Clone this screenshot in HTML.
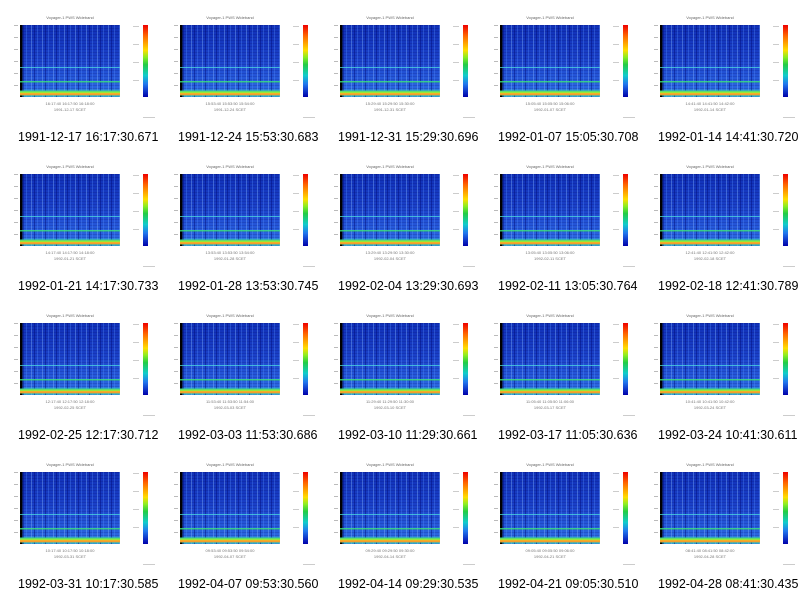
<!DOCTYPE html>
<html><head><meta charset="utf-8"><style>
body{margin:0;width:800px;height:596px;background:#fff;position:relative;overflow:hidden;font-family:"Liberation Sans",sans-serif}
.c{position:absolute;width:160px;height:149px}
.t{position:absolute;left:20px;top:15px;width:100px;text-align:center;font-size:4px;color:#666}
.p{position:absolute;left:20px;top:25px;width:100px;height:72px;
background:
linear-gradient(to bottom,transparent 0,transparent 58%,rgba(80,230,230,.7) 58%,rgba(80,230,230,.7) 59.5%,transparent 59.5%,transparent 78%,rgba(60,230,120,.8) 78%,rgba(60,230,120,.8) 80%,transparent 80%,transparent 91%,#3c9 91%,#9e3 94%,#fa2 95%,#e93 97%,#6d6 98%,transparent 98%),
linear-gradient(to right,#000 0,#000 2.5%,transparent 2.5%),
repeating-linear-gradient(to right,rgba(130,180,255,.4) 0,rgba(130,180,255,.4) 1px,transparent 1px,transparent 3px,rgba(0,10,120,.45) 3px,rgba(0,10,120,.45) 4px,transparent 4px,transparent 6px,rgba(90,150,255,.3) 6px,rgba(90,150,255,.3) 7px,transparent 7px,transparent 11px),
repeating-linear-gradient(to bottom,rgba(0,0,80,.15) 0,rgba(0,0,80,.15) 1px,transparent 1px,transparent 3px),
linear-gradient(to bottom,#1030b8 0,#1a40c8 45%,#2455d8 70%,#2a66e0 88%,#30a0d0 92%);}
.b{position:absolute;left:143px;top:25px;width:5px;height:72px;background:linear-gradient(to bottom,#e00 0,#f60 15%,#fd0 35%,#8e2 45%,#2c4 55%,#1cc 70%,#27e 82%,#00a 100%)}
.ax{position:absolute;left:20px;top:101px;width:100px;font-size:4px;color:#777;text-align:center;line-height:6px}
.cap{position:absolute;left:18px;top:130px;font-size:12.5px;color:#000;white-space:nowrap}
.yl{position:absolute;left:14px;top:25px;width:4px;height:72px;background:repeating-linear-gradient(to bottom,#bbb 0,#bbb 1px,transparent 1px,transparent 12px)}
.cl{position:absolute;left:133px;top:26px;width:6px;height:72px;background:repeating-linear-gradient(to bottom,#ccc 0,#ccc 1px,transparent 1px,transparent 18px)}
.w{position:absolute;left:143px;top:117px;width:12px;height:1px;background:#ccc}
</style></head><body>
<div class="c" style="left:0;top:0"><div class="t">Voyager-1 PWS Wideband</div><div class="yl"></div><div class="p"></div><div class="cl"></div><div class="b"></div><div class="ax">16:17:40 16:17:50 16:18:00<br>1991-12-17 SCET</div><div class="w"></div><div class="cap">1991-12-17 16:17:30.671</div></div>
<div class="c" style="left:160px;top:0"><div class="t">Voyager-1 PWS Wideband</div><div class="yl"></div><div class="p"></div><div class="cl"></div><div class="b"></div><div class="ax">15:53:40 15:53:50 15:54:00<br>1991-12-24 SCET</div><div class="w"></div><div class="cap">1991-12-24 15:53:30.683</div></div>
<div class="c" style="left:320px;top:0"><div class="t">Voyager-1 PWS Wideband</div><div class="yl"></div><div class="p"></div><div class="cl"></div><div class="b"></div><div class="ax">15:29:40 15:29:50 15:30:00<br>1991-12-31 SCET</div><div class="w"></div><div class="cap">1991-12-31 15:29:30.696</div></div>
<div class="c" style="left:480px;top:0"><div class="t">Voyager-1 PWS Wideband</div><div class="yl"></div><div class="p"></div><div class="cl"></div><div class="b"></div><div class="ax">15:05:40 15:05:50 15:06:00<br>1992-01-07 SCET</div><div class="w"></div><div class="cap">1992-01-07 15:05:30.708</div></div>
<div class="c" style="left:640px;top:0"><div class="t">Voyager-1 PWS Wideband</div><div class="yl"></div><div class="p"></div><div class="cl"></div><div class="b"></div><div class="ax">14:41:40 14:41:50 14:42:00<br>1992-01-14 SCET</div><div class="w"></div><div class="cap">1992-01-14 14:41:30.720</div></div>

<div class="c" style="left:0;top:149px"><div class="t">Voyager-1 PWS Wideband</div><div class="yl"></div><div class="p"></div><div class="cl"></div><div class="b"></div><div class="ax">14:17:40 14:17:50 14:18:00<br>1992-01-21 SCET</div><div class="w"></div><div class="cap">1992-01-21 14:17:30.733</div></div>
<div class="c" style="left:160px;top:149px"><div class="t">Voyager-1 PWS Wideband</div><div class="yl"></div><div class="p"></div><div class="cl"></div><div class="b"></div><div class="ax">13:53:40 13:53:50 13:54:00<br>1992-01-28 SCET</div><div class="w"></div><div class="cap">1992-01-28 13:53:30.745</div></div>
<div class="c" style="left:320px;top:149px"><div class="t">Voyager-1 PWS Wideband</div><div class="yl"></div><div class="p"></div><div class="cl"></div><div class="b"></div><div class="ax">13:29:40 13:29:50 13:30:00<br>1992-02-04 SCET</div><div class="w"></div><div class="cap">1992-02-04 13:29:30.693</div></div>
<div class="c" style="left:480px;top:149px"><div class="t">Voyager-1 PWS Wideband</div><div class="yl"></div><div class="p"></div><div class="cl"></div><div class="b"></div><div class="ax">13:05:40 13:05:50 13:06:00<br>1992-02-11 SCET</div><div class="w"></div><div class="cap">1992-02-11 13:05:30.764</div></div>
<div class="c" style="left:640px;top:149px"><div class="t">Voyager-1 PWS Wideband</div><div class="yl"></div><div class="p"></div><div class="cl"></div><div class="b"></div><div class="ax">12:41:40 12:41:50 12:42:00<br>1992-02-18 SCET</div><div class="w"></div><div class="cap">1992-02-18 12:41:30.789</div></div>

<div class="c" style="left:0;top:298px"><div class="t">Voyager-1 PWS Wideband</div><div class="yl"></div><div class="p"></div><div class="cl"></div><div class="b"></div><div class="ax">12:17:40 12:17:50 12:18:00<br>1992-02-25 SCET</div><div class="w"></div><div class="cap">1992-02-25 12:17:30.712</div></div>
<div class="c" style="left:160px;top:298px"><div class="t">Voyager-1 PWS Wideband</div><div class="yl"></div><div class="p"></div><div class="cl"></div><div class="b"></div><div class="ax">11:53:40 11:53:50 11:54:00<br>1992-03-03 SCET</div><div class="w"></div><div class="cap">1992-03-03 11:53:30.686</div></div>
<div class="c" style="left:320px;top:298px"><div class="t">Voyager-1 PWS Wideband</div><div class="yl"></div><div class="p"></div><div class="cl"></div><div class="b"></div><div class="ax">11:29:40 11:29:50 11:30:00<br>1992-03-10 SCET</div><div class="w"></div><div class="cap">1992-03-10 11:29:30.661</div></div>
<div class="c" style="left:480px;top:298px"><div class="t">Voyager-1 PWS Wideband</div><div class="yl"></div><div class="p"></div><div class="cl"></div><div class="b"></div><div class="ax">11:05:40 11:05:50 11:06:00<br>1992-03-17 SCET</div><div class="w"></div><div class="cap">1992-03-17 11:05:30.636</div></div>
<div class="c" style="left:640px;top:298px"><div class="t">Voyager-1 PWS Wideband</div><div class="yl"></div><div class="p"></div><div class="cl"></div><div class="b"></div><div class="ax">10:41:40 10:41:50 10:42:00<br>1992-03-24 SCET</div><div class="w"></div><div class="cap">1992-03-24 10:41:30.611</div></div>

<div class="c" style="left:0;top:447px"><div class="t">Voyager-1 PWS Wideband</div><div class="yl"></div><div class="p"></div><div class="cl"></div><div class="b"></div><div class="ax">10:17:40 10:17:50 10:18:00<br>1992-03-31 SCET</div><div class="w"></div><div class="cap">1992-03-31 10:17:30.585</div></div>
<div class="c" style="left:160px;top:447px"><div class="t">Voyager-1 PWS Wideband</div><div class="yl"></div><div class="p"></div><div class="cl"></div><div class="b"></div><div class="ax">09:53:40 09:53:50 09:54:00<br>1992-04-07 SCET</div><div class="w"></div><div class="cap">1992-04-07 09:53:30.560</div></div>
<div class="c" style="left:320px;top:447px"><div class="t">Voyager-1 PWS Wideband</div><div class="yl"></div><div class="p"></div><div class="cl"></div><div class="b"></div><div class="ax">09:29:40 09:29:50 09:30:00<br>1992-04-14 SCET</div><div class="w"></div><div class="cap">1992-04-14 09:29:30.535</div></div>
<div class="c" style="left:480px;top:447px"><div class="t">Voyager-1 PWS Wideband</div><div class="yl"></div><div class="p"></div><div class="cl"></div><div class="b"></div><div class="ax">09:05:40 09:05:50 09:06:00<br>1992-04-21 SCET</div><div class="w"></div><div class="cap">1992-04-21 09:05:30.510</div></div>
<div class="c" style="left:640px;top:447px"><div class="t">Voyager-1 PWS Wideband</div><div class="yl"></div><div class="p"></div><div class="cl"></div><div class="b"></div><div class="ax">08:41:40 08:41:50 08:42:00<br>1992-04-28 SCET</div><div class="w"></div><div class="cap">1992-04-28 08:41:30.435</div></div>
</body></html>
